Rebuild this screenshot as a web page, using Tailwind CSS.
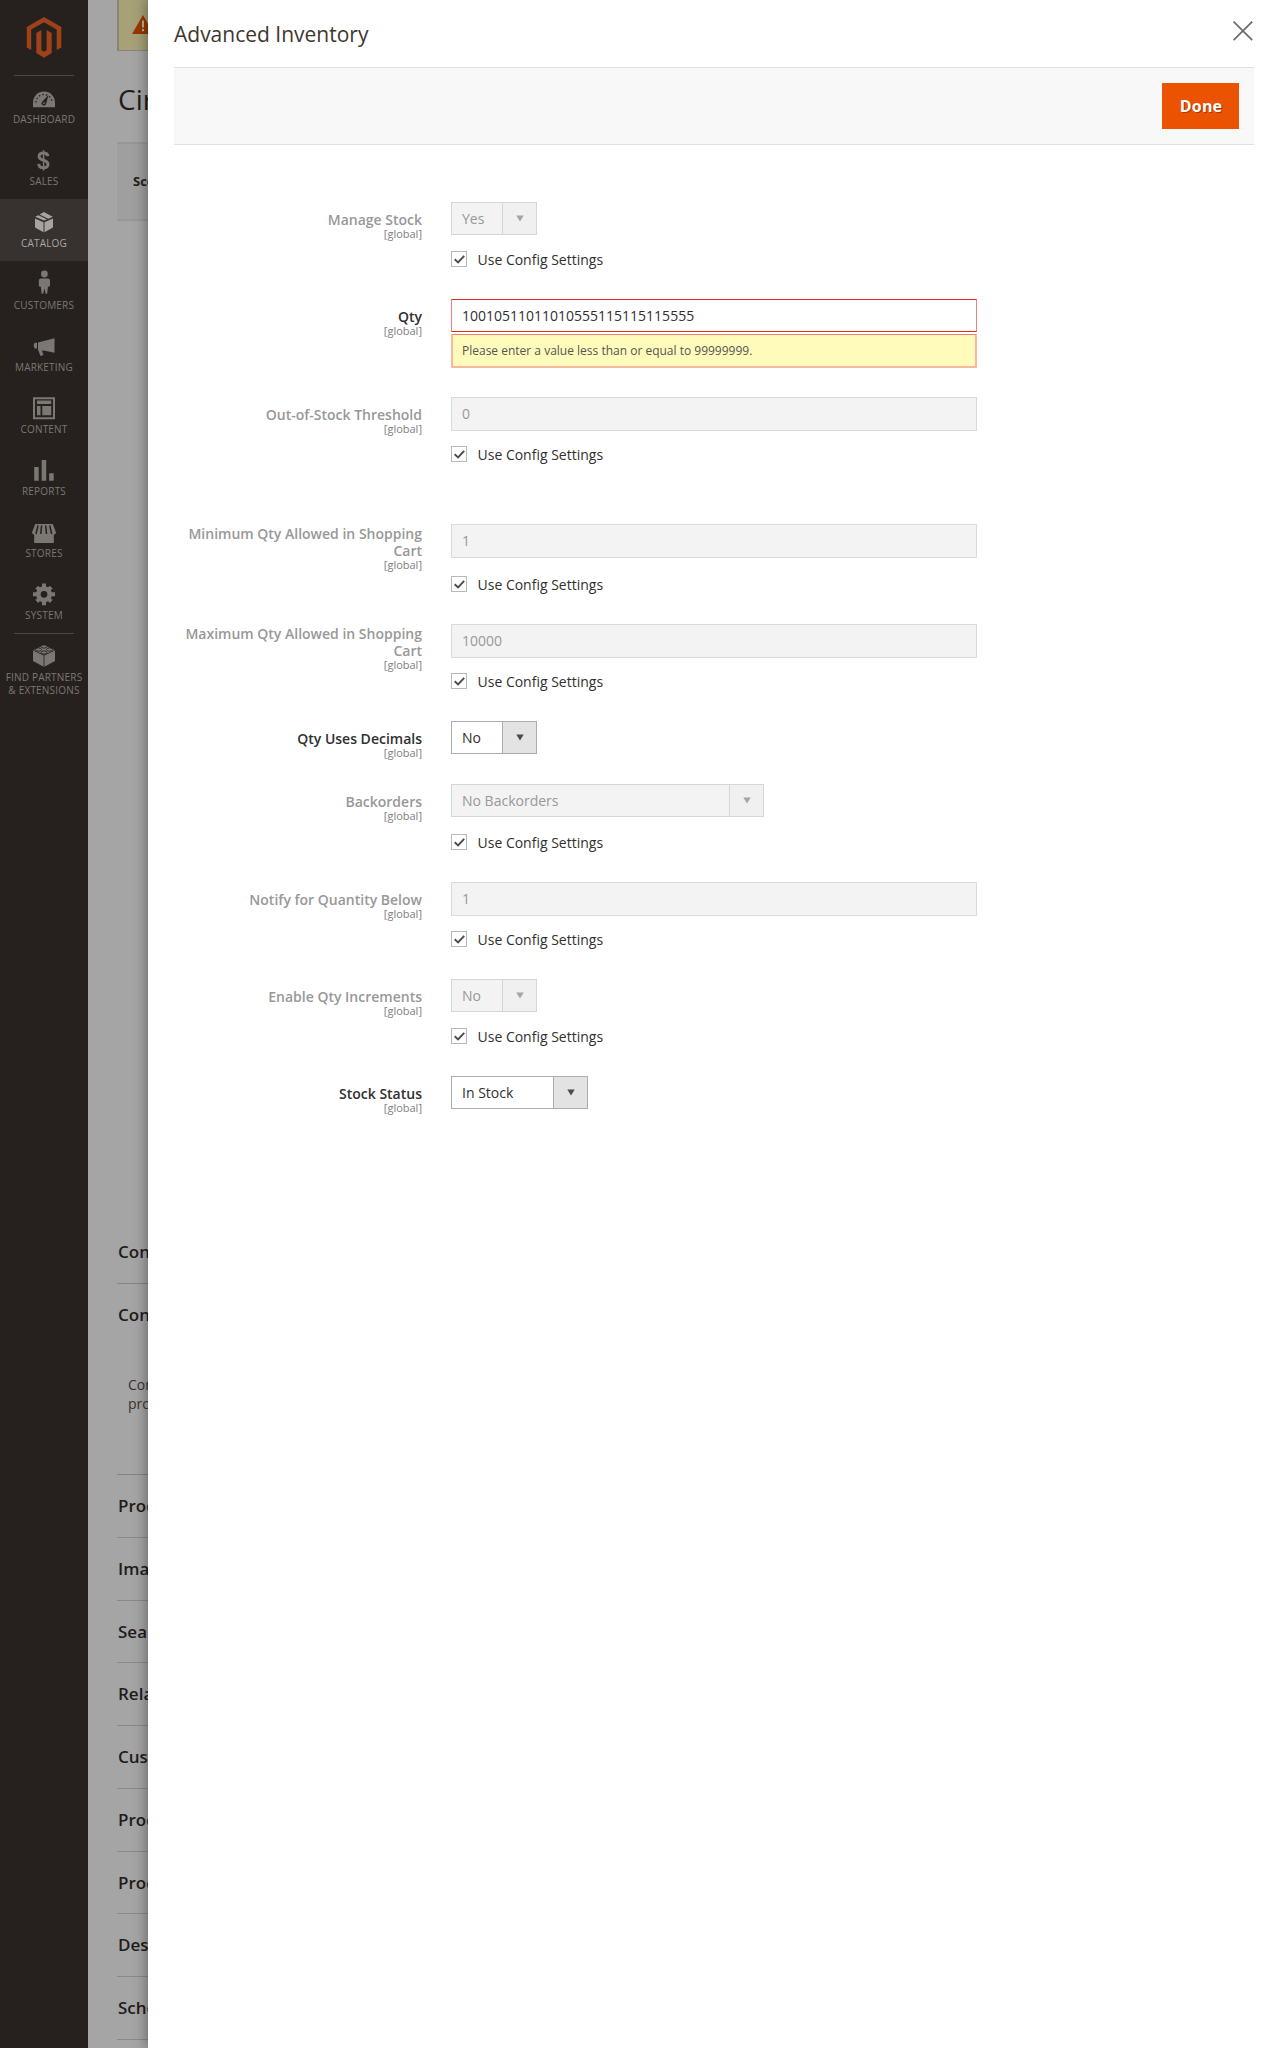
<!DOCTYPE html>
<html lang="en">
<head>
<meta charset="utf-8">
<title>Advanced Inventory</title>
<script src="https://cdn.jsdelivr.net/npm/@tailwindcss/browser@4"></script>
</head>
<body class="bg-[#a5a5a5] font-['Open_Sans',sans-serif] text-[#303030]">
<div class="relative flex h-[2048px] w-[1280px] overflow-hidden">

  <nav class="w-[88px] shrink-0 bg-[#26211e] text-center text-[10px] leading-[13px] tracking-[0.2px] text-[#7b7773]">
    <div class="flex h-[76px] justify-center pt-[17px]">
      <svg class="h-[41px] w-[36px]" viewBox="0 0 36 41" fill="#9e4218"><path d="M18 0 35.3 10v20.4l-4.6 2.6V12.6L18 5.3 5.2 12.6V33L.8 30.4V10z"/><path d="M15.4 13v20.200l2.600 1.600 2.600-1.600V13l5.100 3v20L18 40.700 10.300 36V16z"/></svg>
    </div>
    <div class="mx-auto -mt-px h-px w-[60px] bg-[#4c4743]"></div>
    <a class="-mt-px block h-[62px]"><svg class="h-[38px] w-[88px]" viewBox="0 0 88 38"><path d="M33 32.300V27.500a11 11 0 0 1 22 0v4.800z" fill="#7b7773"/><path d="M36 27.500a8 8 0 0 1 16 0" fill="none" stroke="#26211e" stroke-width="1.400" stroke-dasharray="1.400 2.200"/><path d="m48.400 20.100-6.200 6.600a2.300 2.300 0 1 0 4 2.100z" fill="#26211e"/><circle cx="44" cy="28.100" r=".9" fill="#7b7773"/></svg>DASHBOARD</a>
    <a class="block h-[62px]"><svg class="h-[38px] w-[88px]" viewBox="0 0 88 38" fill="none" stroke="#7b7773"><path d="M48 19.200c-.4-2.200-2-3.200-4.500-3.200-2.700 0-4.400 1.300-4.400 3.400 0 4.900 8.900 2.700 8.900 7.800 0 2.300-1.700 3.600-4.500 3.600-2.900 0-4.600-1.300-4.800-3.900" stroke-width="2.900"/><path d="M43.600 13.200v20.400" stroke-width="1.500"/></svg>SALES</a>
    <a class="block h-[62px] bg-[#37322f] text-[#aaa6a4]"><svg class="h-[38px] w-[88px]" viewBox="0 0 88 38" fill="#a7a3a0"><path d="m35 19.500 8.500 3.800v10L35 28.500zM53 19.500l-8.500 3.800v10L53 28.500z"/><path d="m35.200 17.800 3.200-1.600 8.500 4.100-2.900 1.300zM39.600 15.500l4.200-2.400 9 4.600-4.500 2z"/></svg>CATALOG</a>
    <a class="block h-[62px]"><svg class="h-[38px] w-[88px]" viewBox="0 0 88 38" fill="#7b7773"><circle cx="44.400" cy="13" r="3.400"/><path d="M41 17.400h7c1.600 0 2 1.200 2 2.800v4.300l-1 1.500-1-.5-.8 7.200h-1.600L44.400 27.500l-1.200 5.200h-1.600l-.8-7.200-1 .5-1-1.500v-4.300c0-1.600.6-2.800 2.200-2.800z"/></svg>CUSTOMERS</a>
    <a class="block h-[62px]"><svg class="h-[38px] w-[88px]" viewBox="0 0 88 38" fill="#7b7773"><path d="M54.500 15.200v14.600l-11-2.300-1.500.2 1.500 4.300-3 1-2.500-6.300V19.500zM37 19.800v5.600h-2.200c-1.400-1.600-1.400-4 0-5.600z"/></svg>MARKETING</a>
    <a class="block h-[62px]"><svg class="h-[38px] w-[88px]" viewBox="0 0 88 38" fill="#7b7773"><path d="M34 13.200h20v20H34z" fill="none" stroke="#7b7773" stroke-width="2"/><path d="M37 15.500h14.200v3.500H37zM37 21h3.500v9.200H37zM42.300 21h8.900v9.200h-8.900z"/></svg>CONTENT</a>
    <a class="block h-[62px]"><svg class="h-[38px] w-[88px]" viewBox="0 0 88 38" fill="#7b7773"><path d="M34.200 20h4.500v13.700h-4.500zM41.700 13h4.500v20.700h-4.500zM49.200 26.200h4.500v7.500h-4.500z"/></svg>REPORTS</a>
    <a class="block h-[62px]"><svg class="h-[38px] w-[88px]" viewBox="0 0 88 38"><path d="M35.200 15h17.600l3.200 8.500c-.4 1.500-1.200 2-2.200 2V34H34.200v-8.500c-1 0-1.800-.5-2.200-2z" fill="#7b7773"/><path d="m38 16.500-2 8.500M41.600 16.500l-.8 8.500M45.700 16.500l.8 8.500M49.700 16.500l2 8.500" stroke="#26211e" stroke-width="1.500"/></svg>STORES</a>
    <a class="block h-[62px]"><svg class="h-[38px] w-[88px]" viewBox="0 0 88 38" fill="none" stroke="#7b7773"><circle cx="44" cy="23.300" r="5.700" stroke-width="4.600"/><g stroke-width="4"><path d="M44 12.400v4M44 30.200v4M33 23.300h4M51 23.300h4M36.800 16.100l2.800 2.800M48.400 27.700l2.800 2.800M51.200 16.100l-2.800 2.800M39.600 27.700l-2.800 2.800"/></g></svg>SYSTEM</a>
    <div class="mx-auto h-px w-[60px] bg-[#4c4743]"></div>
    <a class="-mt-px block"><svg class="h-[38px] w-[88px]" viewBox="0 0 88 38" fill="#7b7773"><path d="m33 17.500 10.600 5V33.800L33 28zM55 17.500l-10.600 5V33.800L55 28z"/><path d="m44 12 10.500 5L44 21.700 33.500 17z"/><g stroke="#26211e" stroke-width=".9"><ellipse cx="44" cy="13.500" rx="3" ry="1.600"/><ellipse cx="38.500" cy="16.500" rx="3" ry="1.600"/><ellipse cx="49.500" cy="16.500" rx="3" ry="1.600"/><ellipse cx="44" cy="19.500" rx="3" ry="1.600"/></g></svg>FIND PARTNERS<br>&amp; EXTENSIONS</a>
  </nav>

  <main class="flex w-[60px] shrink-0 flex-col overflow-hidden whitespace-nowrap pl-[29px] text-[#1f1c1b]">
    <div class="h-[51px] shrink-0 border-b border-l-2 border-[#85857a] bg-[#a6a177] pl-[13px] pt-[15px]">
      <svg class="h-[19px] w-[22px]" viewBox="0 0 22 19"><path d="M11 0 22 19H0z" fill="#9b3600"/><path d="M11 5.500v7M11 14v2.200" stroke="#b8b49a" stroke-width="2"/></svg>
    </div>
    <div class="h-[91px] shrink-0 pl-px pt-[28px] text-[28px] leading-[40px]">Circle</div>
    <div class="flex h-[79px] shrink-0 items-center border-y-2 border-[#979797] bg-[#9f9f9f] pl-4 text-[13px] font-bold">Scope</div>
    <div class="mt-[999px] flex h-[64px] shrink-0 items-center border-b border-[#848484] pl-px text-[17px] font-semibold">Content</div>
    <div class="h-[191px] shrink-0 border-b border-[#848484] pl-px pt-[19px] text-[17px] font-semibold leading-6">Configurations
      <div class="pl-[10px] pt-[48px] text-[14px] font-normal leading-[19px] text-[#39332f]">Configurable<br>products</div>
    </div>
    <div id="sections" class="flex flex-col text-[17px] font-semibold"></div>
  </main>

  <section class="relative w-[1132px] shrink-0 bg-white pl-[26px] shadow-[0_0_12px_2px_rgba(0,0,0,0.35)]">
    <header class="flex h-[67px] w-[1080px] justify-between pt-[14px]">
      <h1 class="text-[21px] leading-[40px] text-[#41362f]">Advanced Inventory</h1>
      <svg class="mr-px mt-[7px] h-5 w-5" viewBox="0 0 20 20" fill="none" stroke="#736963" stroke-width="1.700"><path d="m.6.600 18.600 18.600M19.200.600.600 19.200"/></svg>
    </header>
    <div class="flex h-[78px] w-[1080px] items-center justify-end border-y border-[#e0e0e0] bg-[#f8f8f8] pr-[15px]">
      <button class="h-[46px] w-[77px] bg-[#eb5202] pl-px text-[16px] font-bold tracking-[0.2px] text-white [text-shadow:1px_1px_0_rgba(0,0,0,0.3)]">Done</button>
    </div>
    <form id="form" class="pt-[57px] text-[14px]"></form>
  </section>
</div>

<script>
  document.getElementById('sections').innerHTML =
    ['Product Reviews', 'Images And Videos', 'Search Engine', 'Related Products', 'Customizable', 'Product in Websites', 'Products', 'Design', 'Schedule'].map(t =>
      `<div class="flex h-[62.750px] shrink-0 items-center border-b border-[#898989] pl-px">${t}</div>`).join('') ;

  const arrow = '<svg class="h-[7px] w-[8px]" viewBox="0 0 8 7"><path d="M.3.500h7.400L4 6.500z" fill="currentColor"/></svg>';
  const input = v => `<div class="flex h-[34px] w-[526px] items-center border border-[#dadada] bg-[#f3f3f3] pb-[2px] pl-[10px] text-[#989898]">${v}</div>`;
  const select = (v, w, on) => `<div class="flex h-[33px] border ${on ? 'border-[#adadad] bg-white text-[#303030]' : 'border-[#d6d6d6] bg-[#f3f3f3] text-[#989898]'}" style="width:${w}px">
      <span class="flex grow items-center pl-[10px] pb-px">${v}</span>
      <span class="flex w-[34px] items-center justify-center border-l ${on ? 'border-[#adadad] bg-[#e3e3e3] text-[#514943]' : 'border-[#d6d6d6] bg-[#f0f0f0] text-[#a8a4a1]'}">${arrow}</span></div>`;
  const error = `<div class="flex h-[33px] w-[526px] items-center border border-[#e22626] border-x-[#ee8080] bg-white pb-px pl-[10px]">10010511011010555115115115555</div>
      <div class="mt-[2px] flex h-[34px] w-[526px] items-center border-2 border-t border-[#fbb6a0] border-t-[#f08070] bg-[#fffbbb] pl-[9px] text-[12px] text-[#555]">Please enter a value less than or equal to 99999999.</div>`;
  const check = gap => `<label class="flex h-4 items-center" style="margin-top:${gap}px"><span class="flex h-4 w-4 items-center justify-center border border-[#b8b8b8] bg-white"><svg class="h-[9px] w-[11px]" viewBox="0 0 11 9"><path d="m.7 4.200 3.400 3.300L10.200.900" fill="none" stroke="#514943" stroke-width="1.900"/></svg></span><span class="pl-[10.500px] pt-px leading-4">Use Config Settings</span></label>`;

  // label, field markup, row height, checkbox gap (0 = none), enabled, two-line label
  const rows = [
    ['Manage Stock', select('Yes', 86), 97, 16],
    ['Qty', error, 98, 0, true],
    ['Out-of-Stock Threshold', input('0'), 127, 15],
    ['Minimum Qty Allowed in Shopping Cart', input('1'), 100, 18, false, true],
    ['Maximum Qty Allowed in Shopping Cart', input('10000'), 97, 15, false, true],
    ['Qty Uses Decimals', select('No', 86, true), 63, 0, true],
    ['Backorders', select('No Backorders', 313), 98, 17],
    ['Notify for Quantity Below', input('1'), 97, 15],
    ['Enable Qty Increments', select('No', 86), 97, 16],
    ['Stock Status', select('In Stock', 137, true), 60, 0, true]
  ];
  document.getElementById('form').innerHTML = rows.map(([label, field, h, gap, on, tall]) =>
    `<div class="flex" style="height:${h}px">
      <div class="w-[248px] text-right font-semibold leading-[17px] ${on ? 'text-[#303030]' : 'text-[#989898]'} ${tall ? 'pt-px' : 'pt-[9px]'}">${label}
        <div class="-mt-px text-[11px] font-normal leading-[14px] text-[#808080]">[global]</div></div>
      <div class="pl-[29px]">${field}${gap ? check(gap) : ''}</div>
    </div>`).join('');
</script>
</body>
</html>
